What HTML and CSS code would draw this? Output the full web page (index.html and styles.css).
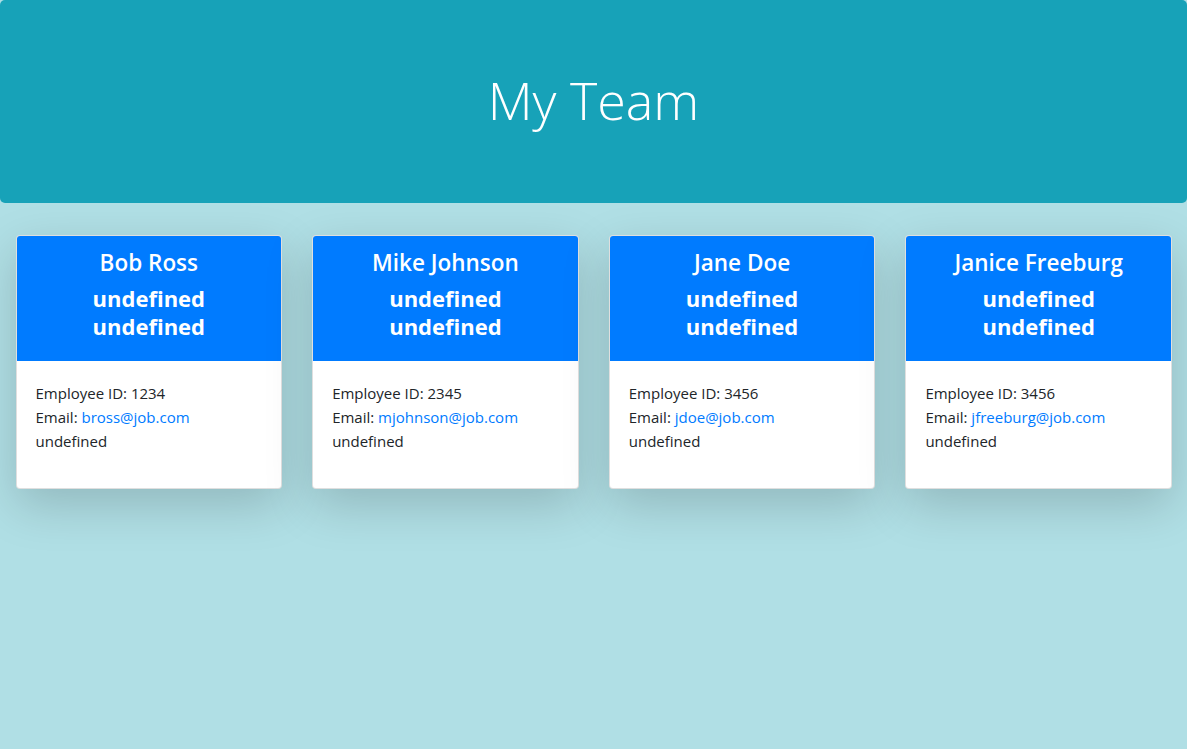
FILE: index.html
```html
<!DOCTYPE html>
<html lang="en">
<head>
<meta charset="utf-8">
<title>My Team</title>
<link rel="stylesheet" href="styles.css">
</head>
<body>
<header class="jumbotron">
  <h1 class="title">My Team</h1>
</header>
<main class="team">
  <div class="card">
    <div class="card-header">
      <h2 class="name">Bob Ross</h2>
      <h3 class="role">undefined<br>undefined</h3>
    </div>
    <div class="card-body">
      <ul class="info">
        <li>Employee ID: 1234</li>
        <li>Email: <a href="#">bross@job.com</a></li>
        <li>undefined</li>
      </ul>
    </div>
  </div>
  <div class="card">
    <div class="card-header">
      <h2 class="name">Mike Johnson</h2>
      <h3 class="role">undefined<br>undefined</h3>
    </div>
    <div class="card-body">
      <ul class="info">
        <li>Employee ID: 2345</li>
        <li>Email: <a href="#">mjohnson@job.com</a></li>
        <li>undefined</li>
      </ul>
    </div>
  </div>
  <div class="card">
    <div class="card-header">
      <h2 class="name">Jane Doe</h2>
      <h3 class="role">undefined<br>undefined</h3>
    </div>
    <div class="card-body">
      <ul class="info">
        <li>Employee ID: 3456</li>
        <li>Email: <a href="#">jdoe@job.com</a></li>
        <li>undefined</li>
      </ul>
    </div>
  </div>
  <div class="card">
    <div class="card-header">
      <h2 class="name">Janice Freeburg</h2>
      <h3 class="role">undefined<br>undefined</h3>
    </div>
    <div class="card-body">
      <ul class="info">
        <li>Employee ID: 3456</li>
        <li>Email: <a href="#">jfreeburg@job.com</a></li>
        <li>undefined</li>
      </ul>
    </div>
  </div>
</main>
</body>
</html>
```

FILE: styles.css
```css
* { box-sizing: border-box; }
html, body { margin: 0; }
body {
  background: #b0dfe5;
  font-family: "Open Sans", "Noto Sans", sans-serif;
  font-size: 15px;
  line-height: 24px;
  color: #212529;
  min-height: 749px;
}
.jumbotron {
  background: #17a2b8;
  border-radius: 5px;
  height: 203px;
  display: flex;
  align-items: center;
  justify-content: center;
  margin-bottom: 32px;
}
.title {
  margin: 0 0 3px;
  color: #fff;
  font-weight: 300;
  font-size: 52px;
  line-height: 64px;
}
.team {
  display: grid;
  grid-template-columns: repeat(4, 1fr);
  gap: 30px;
  padding: 0 15px 0 15.5px;
}
.card {
  background: #fff;
  border: 1px solid rgba(0,0,0,0.125);
  border-radius: 4px;
  box-shadow: 0 16px 48px rgba(0,0,0,0.175);
  overflow: hidden;
  height: 254px;
  display: flex;
  flex-direction: column;
}
.card-header {
  background: #007bff;
  color: #fff;
  text-align: center;
  padding: 12px 10px 11px;
  height: 125px;
}
.name {
  margin: 0 0 7px;
  font-size: 22.5px;
  font-weight: 600;
  line-height: 29px;
}
.role {
  margin: 0;
  font-size: 22px;
  font-weight: 700;
  line-height: 28px;
}
.card-body {
  padding: 20px 19px;
}
.info {
  list-style: none;
  margin: 0;
  padding: 0;
}
.info a {
  color: #007bff;
  text-decoration: none;
}
```
